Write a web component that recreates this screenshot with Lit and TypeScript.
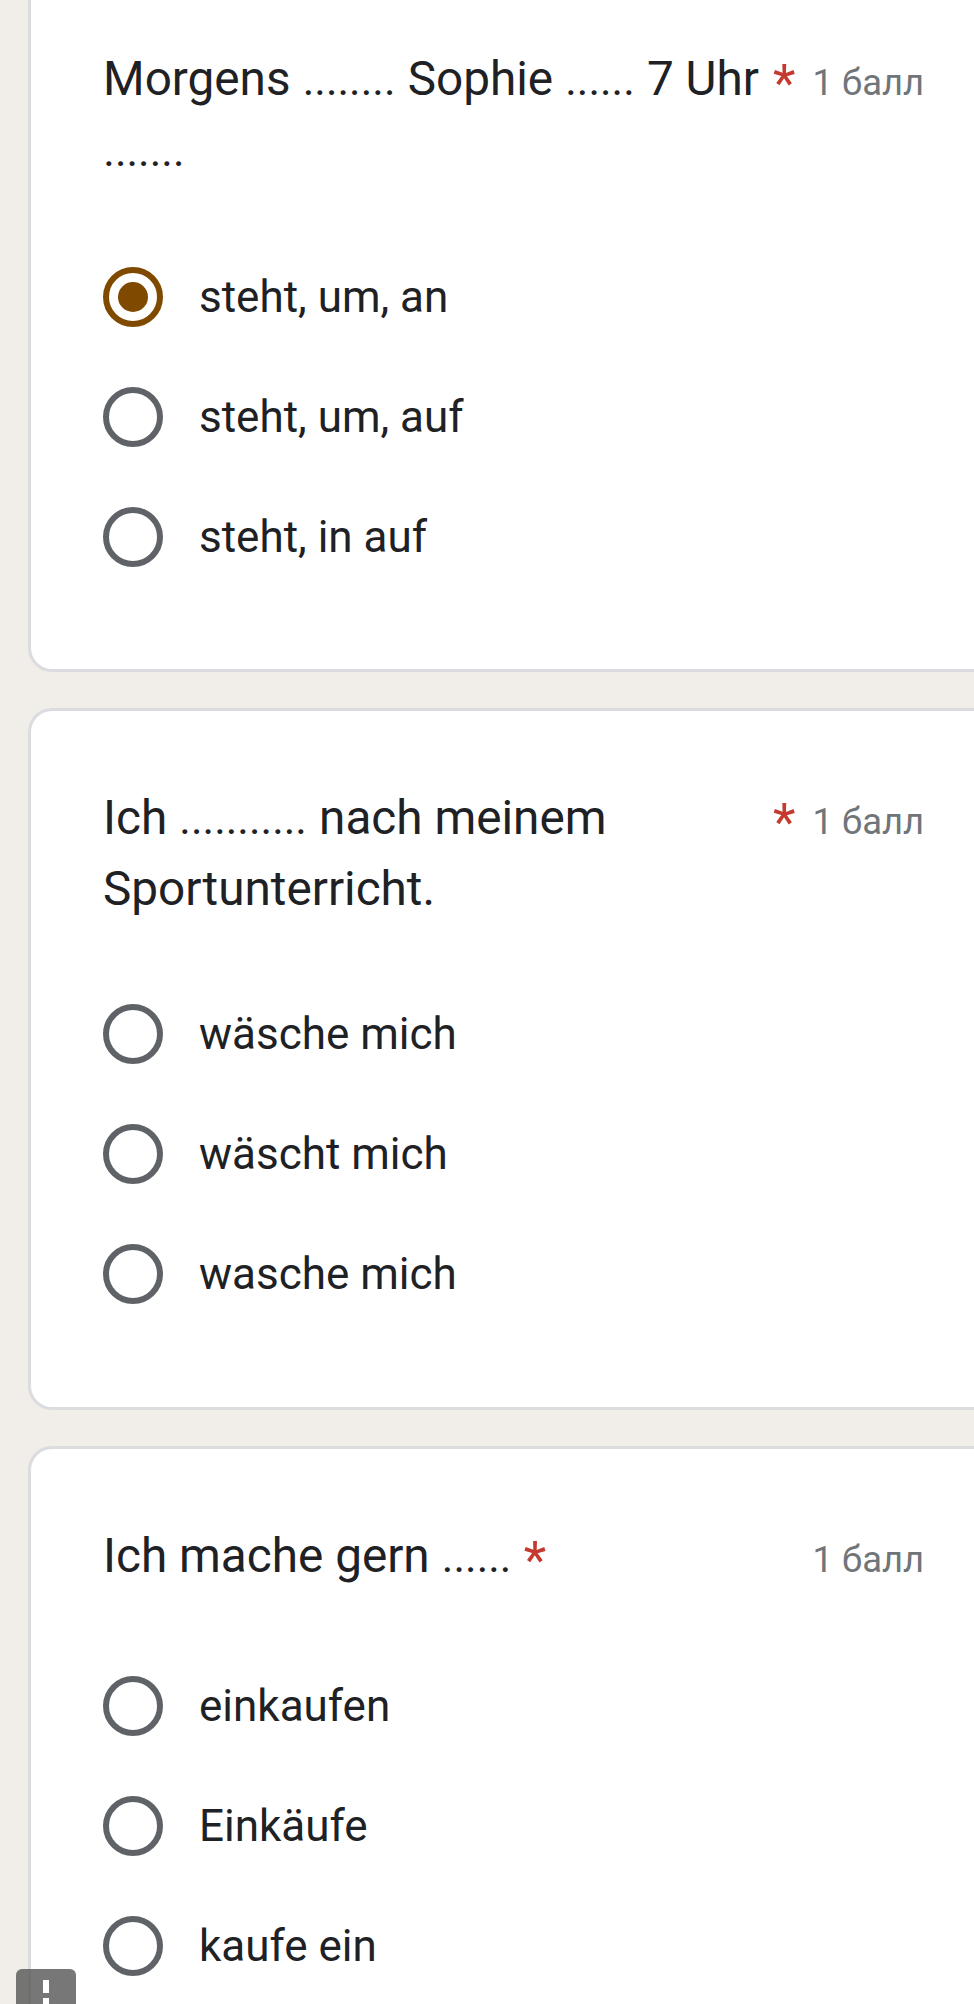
import { LitElement, html, css } from "lit";
import { customElement } from "lit/decorators.js";

interface Question {
  title: string;
  options: string[];
  selected?: number;
  clipped?: boolean;
}

const QUESTIONS: Question[] = [
  { title: "Morgens ........ Sophie ...... 7 Uhr .......", options: ["steht, um, an", "steht, um, auf", "steht, in auf"], selected: 0, clipped: true },
  { title: "Ich ........... nach meinem Sportunterricht.", options: ["wäsche mich", "wäscht mich", "wasche mich"] },
  { title: "Ich mache gern ......", options: ["einkaufen", "Einkäufe", "kaufe ein"] },
];

@customElement("app-root")
export class AppRoot extends LitElement {
  static styles = css`
    :host {
      display: block;
      width: 974px;
      height: 2004px;
      overflow: hidden;
      position: relative;
      background: #f1ede8;
      font-family: Roboto, "Noto Sans", sans-serif;
      color: #202124;
    }
    .page {
      display: flex;
      flex-direction: column;
      gap: 36px;
      padding-left: 28px;
    }
    .card {
      box-sizing: border-box;
      width: 985px;
      height: 702px;
      background: #fff;
      border: 3px solid #dadce0;
      border-right: none;
      border-radius: 24px 0 0 24px;
      padding: 72px 89px 0 72px;
      flex: none;
    }
    .card.clipped {
      height: 672px;
      border-top: none;
      border-top-left-radius: 0;
      padding-top: 44px;
    }
    .head {
      display: flex;
      align-items: flex-start;
      min-height: 76px;
      margin-bottom: 79px;
    }
    .clipped .head {
      margin-bottom: 81px;
    }
    .title {
      font-size: 47.7px;
      line-height: 71px;
      flex: 0 1 auto;
    }
    .dots {
      font-size: 44px;
      line-height: 1;
      margin: 0 0.3px;
    }
    .star {
      font-size: 52px;
      line-height: 71px;
      color: #c5392f;
      margin: 4px 0 0 12px;
      flex: none;
    }
    .points {
      font-size: 36.4px;
      line-height: 71px;
      color: #70757a;
      margin: 3px 0 0 auto;
      padding-left: 17px;
      flex: none;
    }
    .options {
      display: flex;
      flex-direction: column;
      gap: 60px;
    }
    .option {
      display: flex;
      align-items: center;
      gap: 36px;
      height: 60px;
    }
    .radio {
      box-sizing: border-box;
      width: 60px;
      height: 60px;
      border-radius: 50%;
      border: 6px solid #5f6368;
      display: flex;
      align-items: center;
      justify-content: center;
      flex: none;
    }
    .radio.on {
      border-color: #7f4a00;
    }
    .dot {
      width: 30px;
      height: 30px;
      border-radius: 50%;
      background: #7f4a00;
    }
    .label {
      font-size: 44px;
      line-height: 60px;
    }
    .badge {
      position: absolute;
      left: 16px;
      top: 1969px;
      width: 60px;
      height: 60px;
      border-radius: 6px;
      background: rgba(85, 85, 85, 0.8);
    }
    .badge svg {
      display: block;
      width: 60px;
      height: 60px;
    }
  `;

  private renderTitle(title: string) {
    return title
      .split(/(\.{3,})/)
      .map((part, i) => (i % 2 ? html`<span class="dots">${part}</span>` : part));
  }

  render() {
    return html`
      <div class="page">
        ${QUESTIONS.map(
          (q) => html`
            <section class="card ${q.clipped ? "clipped" : ""}">
              <div class="head">
                <div class="title">${this.renderTitle(q.title)}</div>
                <span class="star">*</span>
                <span class="points">1 балл</span>
              </div>
              <div class="options">
                ${q.options.map(
                  (o, i) => html`
                    <div class="option">
                      <div class="radio ${q.selected === i ? "on" : ""}">
                        ${q.selected === i ? html`<div class="dot"></div>` : ""}
                      </div>
                      <span class="label">${o}</span>
                    </div>
                  `
                )}
              </div>
            </section>
          `
        )}
      </div>
      <div class="badge">
        <svg viewBox="0 0 60 60"><rect x="27" y="11" width="6" height="13" fill="#fff"></rect><rect x="27" y="29" width="6" height="8" fill="#fff"></rect></svg>
      </div>
    `;
  }
}
